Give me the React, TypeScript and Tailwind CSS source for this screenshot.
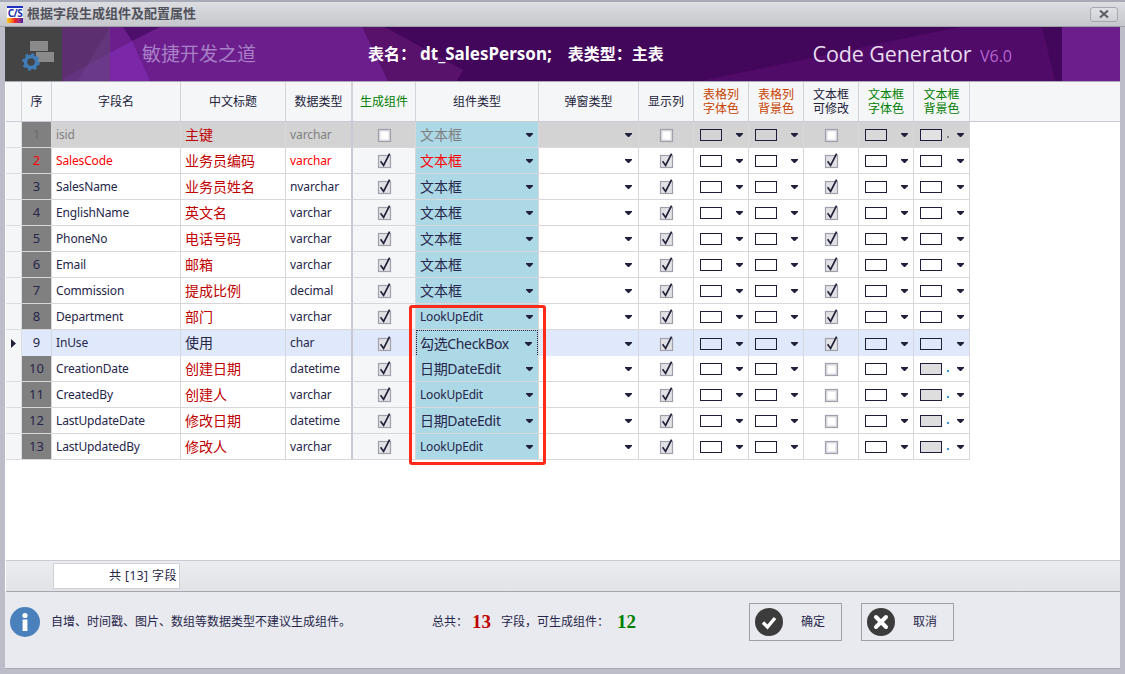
const COLS = 'grid grid-cols-[16px_30px_129px_105px_67px_63px_123px_100px_55px_55px_55px_55px_55px_56px_1fr]';

interface Field {
  name: string;
  title: string;
  type: string;
  comp: string;
  gen: boolean;
  edit: boolean;
}

const FIELDS: Field[] = [
  { name: 'isid', title: '主键', type: 'varchar', comp: '文本框', gen: false, edit: false },
  { name: 'SalesCode', title: '业务员编码', type: 'varchar', comp: '文本框', gen: true, edit: true },
  { name: 'SalesName', title: '业务员姓名', type: 'nvarchar', comp: '文本框', gen: true, edit: true },
  { name: 'EnglishName', title: '英文名', type: 'varchar', comp: '文本框', gen: true, edit: true },
  { name: 'PhoneNo', title: '电话号码', type: 'varchar', comp: '文本框', gen: true, edit: true },
  { name: 'Email', title: '邮箱', type: 'varchar', comp: '文本框', gen: true, edit: true },
  { name: 'Commission', title: '提成比例', type: 'decimal', comp: '文本框', gen: true, edit: true },
  { name: 'Department', title: '部门', type: 'varchar', comp: 'LookUpEdit', gen: true, edit: true },
  { name: 'InUse', title: '使用', type: 'char', comp: '勾选CheckBox', gen: true, edit: true },
  { name: 'CreationDate', title: '创建日期', type: 'datetime', comp: '日期DateEdit', gen: true, edit: false },
  { name: 'CreatedBy', title: '创建人', type: 'varchar', comp: 'LookUpEdit', gen: true, edit: false },
  { name: 'LastUpdateDate', title: '修改日期', type: 'datetime', comp: '日期DateEdit', gen: true, edit: false },
  { name: 'LastUpdatedBy', title: '修改人', type: 'varchar', comp: 'LookUpEdit', gen: true, edit: false },
];

function Arrow() {
  return (
    <svg width="7" height="4" viewBox="0 0 7 4" className="shrink-0">
      <path d="M0 0h7v1L4 4H3L0 1z" fill="#20203c" />
    </svg>
  );
}

function CheckBox({ checked }: { checked: boolean }) {
  return (
    <svg width="15" height="17" viewBox="0 0 15 17">
      <rect x="1.5" y="3.5" width="12" height="12" fill={checked ? '#e2e2e6' : '#dcdce2'} stroke="#a0a0ac" strokeWidth="1.2" />
      {!checked && <rect x="3.5" y="5.5" width="8" height="8" fill="#fff" />}
      {checked && <path d="M3.6 9.2l3 4.2L12.6 1.6" fill="none" stroke="#22223a" strokeWidth="1.7" />}
    </svg>
  );
}

function ColorPick({ fill, dot }: { fill: string; dot?: string }) {
  return (
    <div className="flex h-full items-center pl-[6px] pr-[5px]">
      <span className={`h-[12px] w-[22px] border border-[#1e1e3c] ${fill}`} />
      {dot && <span className={`ml-[5px] mt-[5px] h-[2px] w-[2px] ${dot}`} />}
      <span className="ml-auto">
        <Arrow />
      </span>
    </div>
  );
}

function HeaderCell({ children, color = 'text-[#22223a]', right = 'border-r' }: { children: React.ReactNode; color?: string; right?: string }) {
  return (
    <div className={`flex items-center justify-center border-[#d2d3dc] text-center text-[12px] leading-[14px] whitespace-pre-line ${right} ${color}`}>
      {children}
    </div>
  );
}

function Row({ f, i }: { f: Field; i: number }) {
  const first = i === 0;
  const selected = i === 8;
  const rowBg = first ? 'bg-[#d3d3d3]' : selected ? 'bg-[#e0e9fb]' : 'bg-white';
  const text = first ? 'text-[#7f7f7f]' : i === 1 ? 'text-[#ff0000]' : 'text-[#26264a]';
  const titleColor = selected ? 'text-[#26264a]' : 'text-[#c00000]';
  const compSize = f.comp === 'LookUpEdit' ? 'text-[12px] tracking-[-0.2px]' : f.comp === '文本框' ? 'text-[14px]' : 'text-[14px] tracking-[-0.35px]';
  const lastFill = first ? 'bg-[#e2e2e2]' : i >= 9 ? 'bg-[#dedede]' : selected ? 'bg-[#e0e9fb]' : 'bg-white';
  const swatch = first ? 'bg-[#d3d3d3]' : selected ? 'bg-[#e0e9fb]' : 'bg-white';
  const cell = 'border-r border-b border-[#d8d8dc]';

  return (
    <div className={`${COLS} h-[26px] text-[12px] leading-[25px] ${text}`}>
      <div className="flex items-center justify-center border-r border-b border-[#dcdde3] bg-[#f5f6f8]">
        {selected && (
          <svg width="5" height="9" viewBox="0 0 5 9">
            <path d="M0 0l5 4.5L0 9z" fill="#20203c" />
          </svg>
        )}
      </div>
      <div className={`${cell} text-center text-[13px] ${selected ? rowBg : 'bg-[#808080]'} ${first ? 'text-[#6c6c6c]' : i === 1 ? 'text-[#ff0000]' : 'text-[#26264a]'}`}>
        {i + 1}
      </div>
      <div className={`${cell} ${rowBg} pl-1 tracking-[-0.15px]`}>{f.name}</div>
      <div className={`${cell} ${rowBg} pl-1 text-[14px] ${titleColor}`}>{f.title}</div>
      <div className={`border-r-2 border-b border-r-[#c8c9d4] border-b-[#d8d8dc] ${rowBg} pl-1 tracking-[-0.1px]`}>{f.type}</div>
      <div className={`${cell} flex items-center justify-center ${selected || first ? rowBg : 'bg-[#f5f6f8]'}`}>
        <CheckBox checked={f.gen} />
      </div>
      <div className={`${cell} ${selected ? rowBg : 'bg-[#add8e6]'}`}>
        <div className={`flex h-full items-center justify-between bg-[#add8e6] pr-[5px] ${selected ? 'border border-dotted border-[#20203c] pl-[3px]' : 'pl-[4px]'} ${compSize}`}>
          <span>{f.comp}</span>
          <Arrow />
        </div>
      </div>
      <div className={`${cell} ${rowBg} flex items-center justify-end pr-[6px]`}>
        <Arrow />
      </div>
      <div className={`${cell} ${rowBg} flex items-center justify-center`}>
        <CheckBox checked={!first} />
      </div>
      <div className={`${cell} ${rowBg}`}>
        <ColorPick fill={swatch} />
      </div>
      <div className={`${cell} ${rowBg}`}>
        <ColorPick fill={swatch} />
      </div>
      <div className={`${cell} ${rowBg} flex items-center justify-center`}>
        <CheckBox checked={f.edit} />
      </div>
      <div className={`${cell} ${rowBg}`}>
        <ColorPick fill={first ? 'bg-[#d9d9d9]' : swatch} />
      </div>
      <div className={`${cell} ${rowBg}`}>
        <ColorPick fill={lastFill} dot={first ? 'bg-[#8a8a8a]' : i >= 9 ? 'bg-[#3f8fd6]' : undefined} />
      </div>
    </div>
  );
}

function BannerArt() {
  return (
    <svg className="absolute inset-0" width="1058" height="54" viewBox="0 0 1058 54">
      <rect width="1058" height="54" fill="#6c1f8c" />
      <polygon points="300,0 326,54 1000,54 1000,0" fill="#58126c" />
      <polygon points="323,0 401,43 395,54 640,54 898,0" fill="#42065a" />
      <polygon points="898,0 980,0 993,54 640,54" fill="#500a68" />
      <polygon points="980,0 1000,0 1000,54 993,54" fill="#42065a" />
      <polygon points="0,52 70,14 88,54 0,54" fill="#7a27a8" />
      <polygon points="61,0 98,0 70,14" fill="#4d0f6b" />
      <rect width="48" height="54" fill="#44444a" opacity="0.42" />
      <polygon points="48,0 48,54 16,54" fill="#8a5ab0" opacity="0.18" />
    </svg>
  );
}

function GearLogo() {
  return (
    <svg width="57" height="54" viewBox="0 0 57 54">
      <rect x="25" y="14" width="18" height="10" fill="#8a8a8a" />
      <rect x="31" y="25" width="18" height="10" fill="#8a8a8a" />
      <circle cx="26" cy="35" r="5.5" fill="none" stroke="#3f7cb8" strokeWidth="3.5" />
      <circle cx="26" cy="35" r="7.5" fill="none" stroke="#3f7cb8" strokeWidth="2.6" strokeDasharray="3 2.89" />
    </svg>
  );
}

export default function App() {
  const cjk = { fontFamily: '"Noto Sans", "Noto Sans CJK SC", sans-serif' };
  const serif = { fontFamily: '"Liberation Serif", serif' };

  return (
    <div className="relative flex h-[674px] w-[1125px] flex-col overflow-hidden bg-[#bcbdc9]" style={cjk}>
      {/* Title bar */}
      <div className="flex h-[27px] shrink-0 items-center border-t-2 border-b border-t-[#a9aab8] border-b-[#a0a1a8] bg-gradient-to-b from-[#dddee2] to-[#c6c7cc] px-[7px]">
        <div className="flex h-[17px] w-[16px] flex-col overflow-hidden bg-gradient-to-r from-[#ffd000] via-[#f01020] to-[#5010a0]">
          <span className="h-[2px] bg-[#2030c0]" />
          <span className="h-[10px] bg-white text-center text-[10px] font-bold leading-[10px] tracking-tighter text-[#2030b0]">C/S</span>
        </div>
        <span className="ml-[4px] text-[13px] font-bold text-[#50515a]">根据字段生成组件及配置属性</span>
        <div className="ml-auto flex h-[15px] w-[28px] items-center justify-center rounded-[3px] border border-[#a8a9b0] bg-gradient-to-b from-[#e0e1e5] to-[#cfd0d5]">
          <svg width="10" height="8" viewBox="0 0 10 8">
            <path d="M1 0.5l8 7M9 0.5l-8 7" stroke="#5a5b64" strokeWidth="2" />
          </svg>
        </div>
      </div>

      <div className="flex min-h-0 flex-1 flex-col px-[5px] pb-[5px]">
        {/* Banner */}
        <div className="flex h-[54px] shrink-0 bg-[#444444]">
          <GearLogo />
          <div className="relative flex w-[1000px] items-center">
            <BannerArt />
            <span className="relative ml-[80px] text-[19px] leading-none text-[#a97fc8]">敏捷开发之道</span>
            <span className="relative ml-[112px] flex items-center whitespace-pre text-[16px] font-bold text-white">
              表名：
              <span className="ml-[4px] text-[17px]">dt_SalesPerson;</span>
              <span className="ml-[16px]">表类型：主表</span>
            </span>
            <span className="relative ml-auto mr-[50px] text-[21.5px] font-medium leading-none tracking-[-0.1px] text-[#e8dcf0]" style={{ fontFamily: '"Open Sans", sans-serif' }}>
              Code Generator <span className="ml-[3px] text-[16px] font-normal tracking-normal text-[#b565d0]">V6.0</span>
            </span>
          </div>
        </div>

        {/* Grid */}
        <div className="flex min-h-0 flex-1 flex-col border-t border-[#a9aab4] bg-white pl-px">
          <div className={`${COLS} h-[40px] shrink-0 border-b border-[#c9cad4] bg-[#f5f6f8]`}>
            <HeaderCell>{''}</HeaderCell>
            <HeaderCell>序</HeaderCell>
            <HeaderCell>字段名</HeaderCell>
            <HeaderCell>中文标题</HeaderCell>
            <HeaderCell right="border-r-2">数据类型</HeaderCell>
            <HeaderCell color="text-[#008000]">生成组件</HeaderCell>
            <HeaderCell>组件类型</HeaderCell>
            <HeaderCell>弹窗类型</HeaderCell>
            <HeaderCell>显示列</HeaderCell>
            <HeaderCell color="text-[#c84200]">{'表格列\n字体色'}</HeaderCell>
            <HeaderCell color="text-[#c84200]">{'表格列\n背景色'}</HeaderCell>
            <HeaderCell>{'文本框\n可修改'}</HeaderCell>
            <HeaderCell color="text-[#008000]">{'文本框\n字体色'}</HeaderCell>
            <HeaderCell color="text-[#008000]">{'文本框\n背景色'}</HeaderCell>
          </div>
          {FIELDS.map((f, i) => (
            <Row key={f.name} f={f} i={i} />
          ))}
          <div className="flex-1" />

          {/* Grid footer */}
          <div className="flex h-[32px] shrink-0 items-center border-t border-b border-t-[#c9cad4] border-b-[#a6a7b0] bg-gradient-to-b from-[#ebecf0] to-[#e2e3e7] pl-[47px]">
            <div className="h-[26px] w-[127px] border border-[#d0d1d8] bg-white pr-[2px] text-right text-[12px] leading-[24px] tracking-[0.45px] text-[#26264a]">
              共 [13] 字段
            </div>
          </div>
        </div>

        {/* Bottom panel */}
        <div className="flex h-[77px] shrink-0 items-center border-b border-[#a9aab4] bg-[#e9eaef] pb-[16px] text-[12px] text-[#26264a]">
          <svg width="30" height="30" viewBox="0 0 30 30" className="ml-[5px]">
            <circle cx="15" cy="15" r="15" fill="#4a80bc" />
            <circle cx="15" cy="8.5" r="2.6" fill="#fff" />
            <rect x="12.6" y="12.5" width="4.8" height="11.5" fill="#fff" />
          </svg>
          <span className="ml-[11px] w-[381px]">自增、时间戳、图片、数组等数据类型不建议生成组件。</span>
          <span>总共：</span>
          <span className="ml-[4px] w-[29px] text-[19px] font-bold text-[#c00000]" style={serif}>13</span>
          <span className="w-[116px]">字段，可生成组件：</span>
          <span className="w-[132px] text-[19px] font-bold text-[#008000]" style={serif}>12</span>
          <button className="flex h-[38px] w-[93px] items-center border border-[#a0a1a8] pl-[5px]">
            <svg width="28" height="28" viewBox="0 0 28 28">
              <circle cx="14" cy="14" r="14" fill="#3c3c3c" />
              <path d="M8 14.5l4.5 4.5L20 10" fill="none" stroke="#fff" strokeWidth="3.4" />
            </svg>
            <span className="ml-[18px]">确定</span>
          </button>
          <button className="ml-[19px] flex h-[38px] w-[93px] items-center border border-[#a0a1a8] pl-[5px]">
            <svg width="28" height="28" viewBox="0 0 28 28">
              <circle cx="14" cy="14" r="14" fill="#3c3c3c" />
              <path d="M9 9l10 10M19 9L9 19" fill="none" stroke="#fff" strokeWidth="4" strokeLinecap="round" />
            </svg>
            <span className="ml-[18px]">取消</span>
          </button>
        </div>
      </div>

      {/* Red highlight drawn over the grid */}
      <div className="absolute left-[409px] top-[305px] h-[160px] w-[137px] rounded-[3px] border-[3px] border-[#ff2a1a]" />
    </div>
  );
}
